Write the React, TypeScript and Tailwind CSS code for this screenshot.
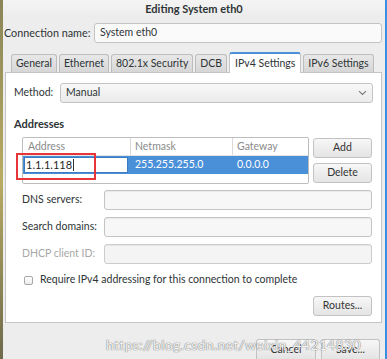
import React from 'react';

const FONT = { fontFamily: 'Lato, "Noto Sans", "DejaVu Sans", sans-serif' };

const TABS = ['General', 'Ethernet', '802.1x Security', 'DCB', 'IPv4 Settings', 'IPv6 Settings'];
const ACTIVE_TAB = 'IPv4 Settings';

function Entry({ className = '', disabled = false }: { className?: string; disabled?: boolean }) {
  return (
    <div
      className={`h-[20px] rounded-[3px] border ${
        disabled ? 'border-[#cdcdcd] bg-[#f4f4f4]' : 'border-[#c4c4c4] bg-[#f7f7f7]'
      } shadow-[inset_0_1px_1px_rgba(0,0,0,0.06)] ${className}`}
    />
  );
}

function Button({ label, className = '' }: { label: string; className?: string }) {
  return (
    <div
      className={`h-[20px] w-[59px] shrink-0 rounded-[3px] border border-[#c2c2c2] bg-gradient-to-b from-[#f7f7f7] to-[#e4e4e4] flex items-center justify-center text-[10.5px] text-[#333] shadow-[0_1px_0_rgba(255,255,255,0.8)] ${className}`}
    >
      {label}
    </div>
  );
}

function FieldRow({ label, disabled = false }: { label: string; disabled?: boolean }) {
  return (
    <div className="flex items-center h-[20px]">
      <div className={`w-[82px] text-[10.5px] ${disabled ? 'text-[#a8a8a8]' : 'text-[#2e3436]'}`}>{label}</div>
      <Entry className="w-[268px]" disabled={disabled} />
    </div>
  );
}

export default function App() {
  return (
    <div className="w-[387px] h-[359px] flex overflow-hidden select-none whitespace-nowrap" style={FONT}>
      <div className="w-[3px] bg-gradient-to-b from-[#8a8458] via-[#b9ac62] to-[#6e6a4c]" />
      <div className="flex-1 bg-[#ededed] flex flex-col relative">
        {/* title bar */}
        <div className="h-[18px] flex items-center justify-center bg-gradient-to-b from-[#f4f4f4] to-[#ececec] text-[11px] font-bold text-[#2e3436] pt-[1px]">
          Editing System eth0
        </div>

        {/* connection name */}
        <div className="flex items-center mt-[5px] h-[20px]">
          <div className="pl-[1px] w-[91px] text-[10.8px] text-[#2e3436]">Connection name:</div>
          <div className="w-[288px] h-[20px] rounded-[3px] border border-[#c4c4c4] bg-[#fafafa] flex items-center px-[5px] text-[10.5px] text-[#2e3436]">
            System eth0
          </div>
        </div>

        {/* notebook */}
        <div className="ml-[2px] w-[377px] mt-[9px] flex flex-col">
          <div className="flex items-end h-[20px] pl-[6px] gap-[2px]">
            {TABS.map((t) =>
              t === ACTIVE_TAB ? (
                <div
                  key={t}
                  className="h-[21px] -mb-[1px] px-[5px] shrink-0 flex items-center bg-white border border-[#c4c4c4] border-b-0 border-t-2 border-t-[#4a90d9] rounded-t-[3px] text-[10.5px] text-[#2e3436] relative z-10"
                >
                  {t}
                </div>
              ) : (
                <div
                  key={t}
                  className="h-[18px] px-[4px] shrink-0 flex items-center bg-gradient-to-b from-[#e8e8e8] to-[#d6d6d6] border border-[#bdbdbd] border-b-0 rounded-t-[3px] text-[10.5px] text-[#2e3436]"
                >
                  {t}
                </div>
              )
            )}
          </div>
          <div className="h-[251px] bg-white border border-[#c4c4c4] flex flex-col pl-[8px] pr-[8px]">
            {/* method */}
            <div className="flex items-center mt-[10px] h-[20px]">
              <div className="w-[46px] text-[10.5px] text-[#2e3436]">Method:</div>
              <div className="w-[313px] h-[20px] rounded-[3px] border border-[#c4c4c4] bg-gradient-to-b from-[#f8f8f8] to-[#ebebeb] flex items-center justify-between px-[5px] text-[10.5px] text-[#2e3436]">
                <span>Manual</span>
                <svg width="9" height="6" viewBox="0 0 9 6">
                  <path d="M1 1.2 L4.5 4.5 L8 1.2" fill="none" stroke="#777" strokeWidth="1.1" />
                </svg>
              </div>
            </div>

            <div className="mt-[14px] text-[11px] font-bold text-[#2e3436] h-[14px] leading-[14px]">Addresses</div>

            {/* addresses table + buttons */}
            <div className="flex mt-[6px] pl-[8px] gap-[4px]">
              <div className="w-[287px] h-[47px] border border-[#bdbdbd] rounded-[2px] bg-white flex flex-col relative">
                <div className="h-[18px] flex text-[10.5px] text-[#8a8a8a] border-b border-[#e4e4e4]">
                  <div className="w-[108px] pl-[5px] flex items-center border-r border-[#dadada]">Address</div>
                  <div className="w-[102px] pl-[4px] flex items-center border-r border-[#dadada]">Netmask</div>
                  <div className="flex-1 pl-[4px] flex items-center">Gateway</div>
                </div>
                <div className="h-[18px] flex bg-[#4a90d9] text-[10.5px] text-white">
                  <div className="w-[108px] pl-[1px] py-[1px]">
                    <div className="h-[16px] w-[104px] bg-white border border-[#3a7bc2] flex items-center pl-[1px] text-[#1f1f1f]">
                      <span className="border-r border-[#333] pr-[1px] leading-[12px] text-[11px]">1.1.1.118</span>
                    </div>
                  </div>
                  <div className="w-[102px] pl-[4px] flex items-center">255.255.255.0</div>
                  <div className="flex-1 pl-[4px] flex items-center">0.0.0.0</div>
                </div>
                <div className="absolute left-[-7px] top-[15px] w-[80px] h-[27px] border-2 border-[#e8353a] z-20" />
              </div>
              <div className="flex flex-col gap-[5px] pt-[1px]">
                <Button label="Add" />
                <Button label="Delete" />
              </div>
            </div>

            {/* fields */}
            <div className="flex flex-col gap-[7px] mt-[6px] pl-[8px]">
              <FieldRow label="DNS servers:" />
              <FieldRow label="Search domains:" />
              <FieldRow label="DHCP client ID:" disabled />
            </div>

            <div className="flex items-center mt-[10px] pl-[10px] h-[12px]">
              <div className="w-[9px] h-[9px] border border-[#a8a8a8] rounded-[2px] bg-gradient-to-b from-white to-[#ececec]" />
              <div className="ml-[7px] text-[10.5px] text-[#2e3436]">Require IPv4 addressing for this connection to complete</div>
            </div>

            <div className="flex justify-end mt-[10px] pr-[1px]">
              <Button label="Routes..." />
            </div>
          </div>
        </div>

        {/* bottom buttons */}
        <div className="flex justify-end gap-[5px] mt-[16px] pr-[5px]">
          <Button label="Cancel" className="w-[60px] h-[19px] rounded-b-none border-b-0" />
          <Button label="Save..." className="w-[57px] h-[19px] rounded-b-none border-b-0" />
        </div>

        <div className="absolute left-[103px] top-[334px] text-[14px] text-white/90 tracking-[0.3px] [text-shadow:0_0_1px_#777,0_0_1px_#777]">
          https://blog.csdn.net/weixin_44214830
        </div>
      </div>
      <div className="w-[2px] bg-[#3a8fe0]" />
    </div>
  );
}
